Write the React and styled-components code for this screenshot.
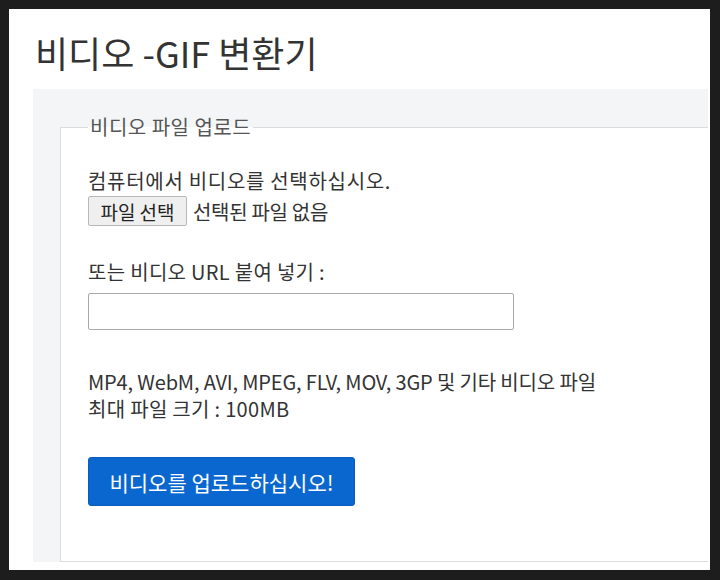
import styled, { createGlobalStyle } from "styled-components";

const GlobalStyle = createGlobalStyle`
    html, body {
        margin: 0;
        background-color: #1d1d1d;
    }
    * {
        box-sizing: border-box;
    }
`

export default function App() {
    return (
        <Frame>
            <GlobalStyle />
            <Page>
                <Title>비디오 -GIF 변환기</Title>
                <Panel>
                    <UploadBox>
                        <Legend>비디오 파일 업로드</Legend>
                        <Text top={28} spacing={0.7}>컴퓨터에서 비디오를 선택하십시오.</Text>
                        <FileRow>
                            <FileButton type="button">파일 선택</FileButton>
                            <FileStatus>선택된 파일 없음</FileStatus>
                        </FileRow>
                        <Text top={32}>또는 비디오 URL 붙여 넣기 :</Text>
                        <UrlInput type="text" />
                        <Text top={38} spacing={-0.15}>MP4, WebM, AVI, MPEG, FLV, MOV, 3GP 및 기타 비디오 파일</Text>
                        <Text>최대 파일 크기 : 100MB</Text>
                        <SubmitButton type="button">비디오를 업로드하십시오!</SubmitButton>
                    </UploadBox>
                </Panel>
            </Page>
        </Frame>
    )
};

const Frame = styled.div`
    width: 720px;
    height: 580px;
    padding: 9px 10px 10px 9px;
    font-family: "Noto Sans CJK KR", "Noto Sans", sans-serif;
`
const Page = styled.div`
    height: 100%;
    background-color: #ffffff;
    display: flex;
    flex-direction: column;
    padding-bottom: 8px;
    overflow: hidden;
`
const Title = styled.h1`
    margin: 0;
    padding: 18px 0 0 26px;
    height: 80px;
    font-size: 36px;
    line-height: 50px;
    font-weight: 400;
    color: #333333;
`
const Panel = styled.div`
    flex: 1;
    display: flex;
    margin: 0 2px 0 24px;
    padding: 26px 0 0 27px;
    background-color: #f3f5f6;
`
const UploadBox = styled.fieldset`
    flex: 1;
    margin: 0;
    padding: 0 0 0 27px;
    background-color: #ffffff;
    border: 1px solid #dcdcdc;
    border-right: none;
    min-width: 0;
`
const Legend = styled.legend`
    padding: 0 2px;
    font-size: 20px;
    line-height: 24px;
    letter-spacing: 0.5px;
    color: #555555;
`
const Text = styled.div`
    margin-top: ${props => props.top || 0}px;
    font-size: 20px;
    line-height: 27px;
    letter-spacing: ${props => props.spacing ?? 0.3}px;
    color: #333333;
`
const FileRow = styled.div`
    display: flex;
    align-items: center;
    gap: 6px;
    margin-top: 2px;
`
const FileButton = styled.button`
    height: 30px;
    width: 99px;
    padding: 0;
    font-family: inherit;
    font-size: 19px;
    color: #222222;
    background-color: #efefef;
    border: 1px solid #b8b8b8;
    border-radius: 2px;
`
const FileStatus = styled.span`
    font-size: 20px;
    letter-spacing: -0.3px;
    color: #333333;
`
const UrlInput = styled.input`
    display: block;
    width: 426px;
    height: 37px;
    margin-top: 8px;
    border: 1px solid #a9a9a9;
    border-radius: 2px;
    background-color: #ffffff;
`
const SubmitButton = styled.button`
    display: block;
    width: 267px;
    height: 49px;
    margin-top: 35px;
    font-family: inherit;
    font-size: 21px;
    color: #ffffff;
    background-color: #0b67d0;
    border: 1px solid #0a5cbd;
    border-radius: 3px;
`
